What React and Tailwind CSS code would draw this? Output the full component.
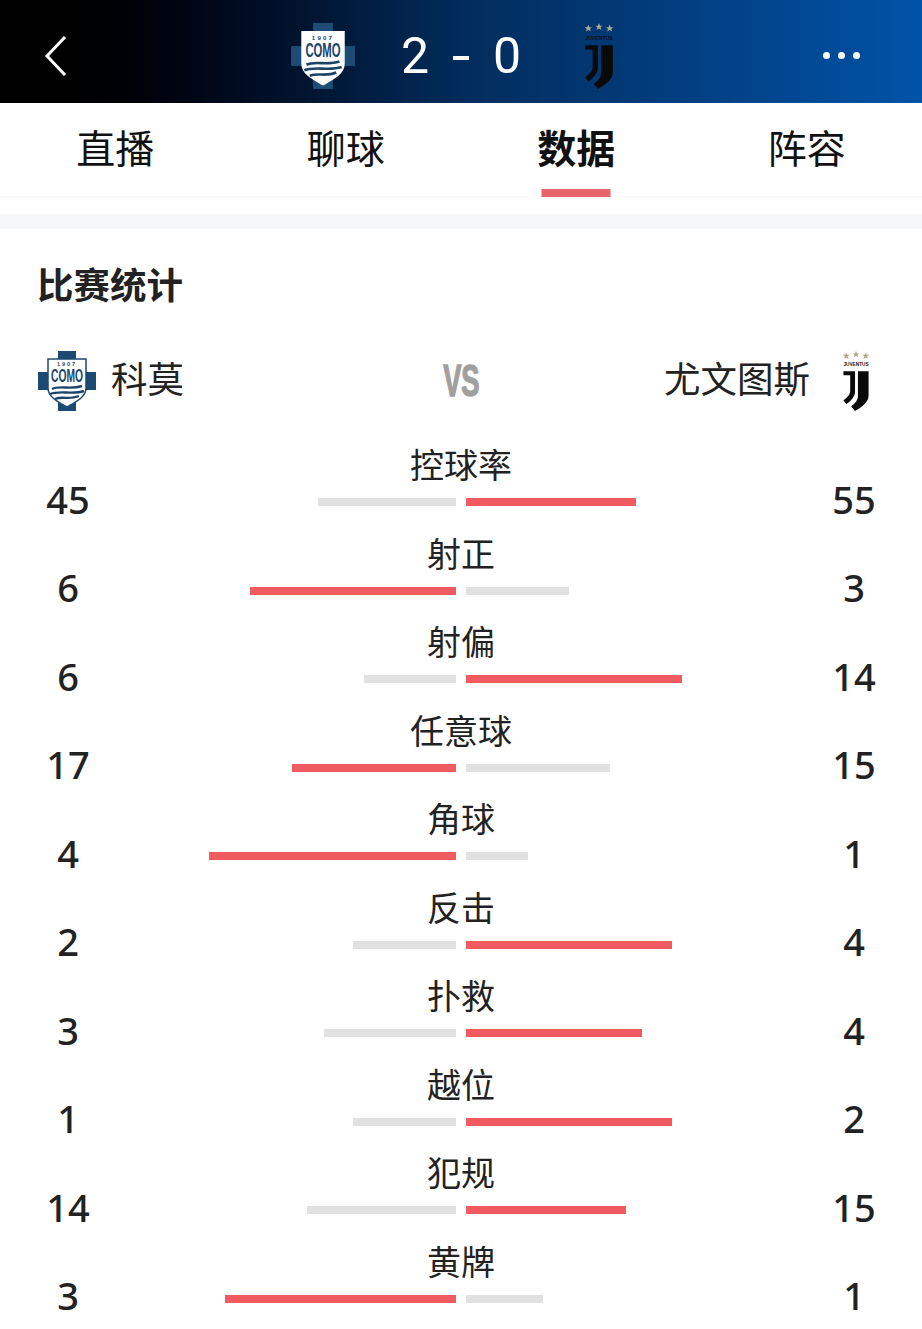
const stats = [
  { name: "控球率", home: 45, away: 55, homeBar: 138, awayBar: 170, homeWins: false },
  { name: "射正", home: 6, away: 3, homeBar: 206, awayBar: 103, homeWins: true },
  { name: "射偏", home: 6, away: 14, homeBar: 92, awayBar: 216, homeWins: false },
  { name: "任意球", home: 17, away: 15, homeBar: 164, awayBar: 144, homeWins: true },
  { name: "角球", home: 4, away: 1, homeBar: 247, awayBar: 62, homeWins: true },
  { name: "反击", home: 2, away: 4, homeBar: 103, awayBar: 206, homeWins: false },
  { name: "扑救", home: 3, away: 4, homeBar: 132, awayBar: 176, homeWins: false },
  { name: "越位", home: 1, away: 2, homeBar: 103, awayBar: 206, homeWins: false },
  { name: "犯规", home: 14, away: 15, homeBar: 149, awayBar: 160, homeWins: false },
  { name: "黄牌", home: 3, away: 1, homeBar: 231, awayBar: 77, homeWins: true },
];

const tabs = ["直播", "聊球", "数据", "阵容"];

const ComoLogo = ({ className, cross, rim }) => (
  <svg viewBox="0 0 58 60" className={`overflow-visible ${className}`}>
    <rect x="20" y="0" width="18" height="60" fill={cross} />
    <rect x="0" y="21" width="58" height="18" fill={cross} />
    <path d="M10 8 H48 V37 C48 46 38 51 29 56 C20 51 10 46 10 37 Z" fill="#fff" stroke={rim} strokeWidth="1.5" />
    <text x="29" y="15" textAnchor="middle" fontSize="5.5" fontWeight="700" letterSpacing="2" fill="#1c4468" fontFamily="Liberation Sans, sans-serif">1907</text>
    <text x="29" y="31" textAnchor="middle" fontSize="18" fontWeight="700" fill="#1c4468" textLength="32" lengthAdjust="spacingAndGlyphs" fontFamily="Liberation Sans, sans-serif">COMO</text>
    <path d="M14 38 C22 34 32 39 44 35 M12 43 C22 39 34 44 46 40 M17 48 C24 45 32 49 41 45" fill="none" stroke="#1c4468" strokeWidth="2.4" />
  </svg>
);

const JuveLogo = ({ className, star }) => (
  <svg viewBox="0 0 28 62" className={`overflow-visible ${className}`}>
    <g fill={star}>
      <path d="M4 1.5 L5 4 H7.5 L5.5 5.6 L6.3 8 L4 6.6 L1.7 8 L2.5 5.6 L.5 4 H3 Z" />
      <path d="M14 0 L15 2.5 H17.5 L15.5 4.1 L16.3 6.5 L14 5.1 L11.7 6.5 L12.5 4.1 L10.5 2.5 H13 Z" />
      <path d="M24 1.5 L25 4 H27.5 L25.5 5.6 L26.3 8 L24 6.6 L21.7 8 L22.5 5.6 L20.5 4 H23 Z" />
    </g>
    <text x="14" y="16" textAnchor="middle" fontSize="5.5" fontWeight="700" textLength="26" lengthAdjust="spacingAndGlyphs" fill="#111" fontFamily="Liberation Sans, sans-serif">JUVENTUS</text>
    <path d="M1 21 H13 V42 C13 47 9 51 4 55 L1 51 C5 48 8 45 8 41 V25 H1 Z" fill="#0a0a0a" />
    <path d="M16 21 H27 V46 C27 53 20 58 13 62 L9 57 C14 54 16 50 16 46 Z" fill="#0a0a0a" />
  </svg>
);

const StatRow = ({ stat }) => (
  <div className="grid grid-cols-[136px_1fr_136px] h-[88.5px]">
    <div className="flex items-end justify-center pb-[12px] text-[38px] leading-[50px] font-medium text-[#222]">{stat.home}</div>
    <div className="flex flex-col items-center">
      <div className="text-[34px] leading-[40px] text-[#222] mt-[-2px]">{stat.name}</div>
      <div className="flex justify-center gap-[10px] w-full mt-[13px]">
        <div className="flex-1 flex justify-end">
          <div className={`h-2 ${stat.homeWins ? "bg-[#ef5b5f]" : "bg-[#e1e1e1]"}`} style={{ width: stat.homeBar }} />
        </div>
        <div className="flex-1 flex justify-start">
          <div className={`h-2 ${stat.homeWins ? "bg-[#e1e1e1]" : "bg-[#ef5b5f]"}`} style={{ width: stat.awayBar }} />
        </div>
      </div>
    </div>
    <div className="flex items-end justify-center pb-[12px] text-[38px] leading-[50px] font-medium text-[#222]">{stat.away}</div>
  </div>
);

export default function App() {
  return (
    <div className="w-[922px] h-[1329px] overflow-hidden bg-white font-['Noto_Sans','Noto_Sans_CJK_SC',sans-serif]">
      <div className="h-[103px] pt-[8px] grid grid-cols-[1fr_342px_1fr] items-center bg-gradient-to-r from-[#000000] via-[#022c5c] to-[#0053a8]">
        <div className="pl-[44px]">
          <svg viewBox="0 0 24 42" className="w-6 h-[42px]" fill="none" stroke="#fff" strokeWidth="3">
            <path d="M21 2 L3 21 L21 40" />
          </svg>
        </div>
        <div className="flex items-center justify-between">
          <ComoLogo className="w-[66px] h-[66px]" cross="#1d4c74" rim="#fff" />
          <div className="flex items-center gap-[24px] text-[50px] leading-none text-white font-['Roboto',sans-serif]">
            <span>2</span>
            <span className="w-4 h-1 mt-1 bg-white" />
            <span>0</span>
          </div>
          <div className="w-[66px] flex justify-center">
            <JuveLogo className="w-[30px] h-[66px]" star="#a9a98f" />
          </div>
        </div>
        <div className="flex justify-end gap-[8px] pr-[62px]">
          <div className="w-[7px] h-[7px] rounded-full bg-white" />
          <div className="w-[7px] h-[7px] rounded-full bg-white" />
          <div className="w-[7px] h-[7px] rounded-full bg-white" />
        </div>
      </div>

      <div className="grid grid-cols-4 h-[94px] border-b border-[#f6f6f6]">
        {tabs.map((tab, i) => (
          <div key={tab} className="relative flex justify-center pt-[20px]">
            <span className={`text-[39px] leading-[50px] text-[#111] ${i === 2 ? "font-bold" : ""}`}>{tab}</span>
            {i === 2 && <div className="absolute bottom-[-1px] left-1/2 -translate-x-1/2 w-[69px] h-2 bg-[#e9636a]" />}
          </div>
        ))}
      </div>
      <div className="h-[17px]" />
      <div className="h-[15px] bg-[#f5f6f8]" />

      <div className="pl-[37px] pt-[32px] text-[36.5px] leading-[48px] font-bold text-[#222]">比赛统计</div>

      <div className="grid grid-cols-[1fr_auto_1fr] items-center px-[38px] mt-[41px] h-[62px]">
        <div className="flex items-center gap-[15px]">
          <ComoLogo className="w-[58px] h-[60px]" cross="#1c4a72" rim="#1c4a72" />
          <span className="text-[36.5px] leading-[50px] mt-[-4px] text-[#222]">科莫</span>
        </div>
        <div className="text-[44px] leading-none font-bold text-[#a0a0a0] scale-x-[0.62] [-webkit-text-stroke:1.5px_#a0a0a0] font-['Liberation_Sans',sans-serif]">VS</div>
        <div className="flex items-center justify-end gap-[32px] pr-[14px]">
          <span className="text-[36.5px] leading-[50px] mt-[-4px] text-[#222]">尤文图斯</span>
          <JuveLogo className="w-[28px] h-[60px]" star="#b0ab84" />
        </div>
      </div>

      <div className="mt-[35px]">
        {stats.map((stat) => (
          <StatRow key={stat.name} stat={stat} />
        ))}
      </div>
    </div>
  );
}
